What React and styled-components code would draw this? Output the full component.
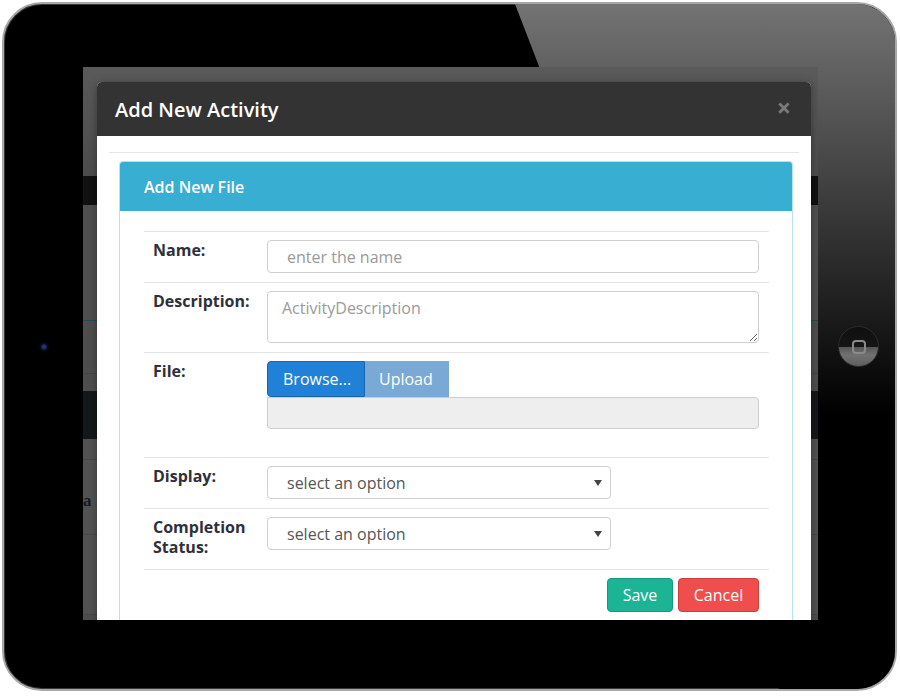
import React from 'react';
import styled, { createGlobalStyle } from 'styled-components';

const FONT = "'Open Sans', 'Liberation Sans', sans-serif";

const GlobalStyle = createGlobalStyle`
  html, body {
    margin: 0;
    padding: 0;
    background: #fff;
  }
  body {
    font-family: ${FONT};
  }
  * {
    box-sizing: border-box;
  }
`;

const Page = styled.div`
  width: 900px;
  height: 696px;
  padding: 2px 0 0 2px;
  background: #fff;
  overflow: hidden;
`;

const Tablet = styled.div`
  position: relative;
  width: 895px;
  height: 689px;
  border: 2px solid #a8a8a8;
  border-radius: 40px;
  background: #000;
  overflow: hidden;
  display: flex;
  align-items: flex-start;
  padding-top: 63px;
  box-shadow: inset 0 0 0 1px #3a3a3a;
`;

const GlareSvg = styled.svg`
  position: absolute;
  left: 0;
  top: 0;
  width: 100%;
  height: 100%;
  pointer-events: none;
`;

const Side = styled.div`
  position: relative;
  width: ${(p) => p.$w}px;
  height: 553px;
  display: flex;
  align-items: center;
  justify-content: center;
  padding-top: 6px;
  padding-left: ${(p) => p.$pl || 0}px;
`;

const Camera = styled.div`
  width: 6px;
  height: 6px;
  border-radius: 50%;
  background: radial-gradient(circle at 50% 45%, #2a3f9a 0%, #15204d 60%, #0b0f20 100%);
  box-shadow: 0 0 3px 1px rgba(40, 60, 120, 0.35);
`;

const HomeButton = styled.div`
  width: 41px;
  height: 41px;
  border-radius: 50%;
  border: 1px solid #2c2c2c;
  background: linear-gradient(to bottom, #0f0f0f 0%, #151515 50%, #555 51%, #727272 72%, #5e5e5e 100%);
  display: flex;
  align-items: center;
  justify-content: center;
`;

const HomeSquare = styled.div`
  width: 14px;
  height: 14px;
  border: 2px solid #8a8a8a;
  border-radius: 4px;
`;

const Screen = styled.div`
  position: relative;
  width: 735px;
  height: 553px;
  overflow: hidden;
  background: #505050;
  display: flex;
  flex-direction: column;
`;

const Band = styled.div`
  height: ${(p) => p.$h}px;
  flex: none;
  background: ${(p) => p.$bg || '#505050'};
  border-bottom: ${(p) => (p.$line ? `1px solid ${p.$line}` : 'none')};
  display: flex;
  align-items: center;
`;

const BandText = styled.span`
  font-family: 'Liberation Serif', serif;
  font-weight: 700;
  font-size: 17px;
  color: #161a26;
  margin-top: 8px;
`;

const Modal = styled.div`
  position: absolute;
  left: 14px;
  top: 15px;
  width: 714px;
  height: 600px;
  background: #fff;
  border-radius: 5px 5px 0 0;
  box-shadow: 0 2px 8px rgba(0, 0, 0, 0.35);
  display: flex;
  flex-direction: column;
`;

const ModalHeader = styled.div`
  height: 54px;
  flex: none;
  background: #333;
  border-radius: 5px 5px 0 0;
  display: flex;
  align-items: center;
  justify-content: space-between;
  padding: 0 20px 0 18px;
`;

const ModalTitle = styled.h4`
  margin: 0;
  font-size: 20px;
  font-weight: 600;
  color: #fff;
`;

const Close = styled.span`
  font-size: 25px;
  font-weight: 700;
  line-height: 1;
  color: #7b7b7b;
  margin-top: -4px;
`;

const ModalBody = styled.div`
  flex: 1;
  display: flex;
  flex-direction: column;
  padding: 0 12px;
`;

const Divider = styled.div`
  height: 17px;
  flex: none;
  border-bottom: 1px solid #e6e6e6;
`;

const Panel = styled.div`
  flex: 1;
  margin: 8px 6px 0 10px;
  border: 1px solid #b6e3ee;
  border-bottom: none;
  border-radius: 4px 4px 0 0;
`;

const PanelHeading = styled.div`
  height: 49px;
  background: #39aed3;
  border-radius: 3px 3px 0 0;
  display: flex;
  align-items: center;
  padding-left: 24px;
  color: #fff;
  font-size: 16px;
  font-weight: 600;
`;

const PanelBody = styled.div`
  padding: 20px 23px 0 24px;
`;

const Row = styled.div`
  display: grid;
  grid-template-columns: 123px 1fr;
  border-top: 1px solid #e4e4e4;
`;

const Label = styled.div`
  padding: 8px 9px 12px;
  font-size: 16px;
  line-height: 20px;
  font-weight: 700;
  color: #2f3038;
`;

const Cell = styled.div`
  padding: 8px 10px 9px 0;
  display: flex;
  flex-direction: column;
  align-items: flex-start;
`;

const TextInput = styled.input`
  width: 100%;
  height: 33px;
  border: 1px solid #cfcfcf;
  border-radius: 4px;
  padding: 0 19px;
  font-family: ${FONT};
  font-size: 16px;
  color: #555;
  outline: none;
  &::placeholder {
    color: #9a9a9a;
  }
`;

const TextArea = styled.textarea`
  width: 100%;
  height: 52px;
  border: 1px solid #cfcfcf;
  border-radius: 4px;
  padding: 6px 14px;
  font-family: ${FONT};
  font-size: 16px;
  line-height: 20px;
  color: #555;
  outline: none;
  resize: vertical;
  display: block;
  &::placeholder {
    color: #9a9a9a;
  }
`;

const FileButtons = styled.div`
  display: flex;
`;

const FileButton = styled.div`
  height: 36px;
  width: ${(p) => p.$w}px;
  padding-left: ${(p) => p.$pl}px;
  display: flex;
  align-items: center;
  font-size: 16px;
  color: #fff;
  background: ${(p) => p.$bg};
  border: 1px solid ${(p) => p.$bd};
  border-radius: ${(p) => p.$radius};
`;

const FileBox = styled.div`
  width: 100%;
  height: 32px;
  background: #eee;
  border: 1px solid #cdcdcd;
  border-radius: 0 4px 4px 4px;
  margin-bottom: 19px;
`;

const Select = styled.div`
  width: 344px;
  height: 33px;
  border: 1px solid #cfcfcf;
  border-radius: 4px;
  display: flex;
  align-items: center;
  justify-content: space-between;
  padding: 0 8px 0 19px;
  font-size: 16px;
  color: #555;
`;

const Caret = styled.span`
  width: 0;
  height: 0;
  border-left: 4px solid transparent;
  border-right: 4px solid transparent;
  border-top: 6px solid #444;
`;

const Actions = styled.div`
  border-top: 1px solid #e4e4e4;
  display: flex;
  justify-content: flex-end;
  gap: 5px;
  padding: 8px 10px 0 0;
`;

const ActionButton = styled.div`
  height: 34px;
  width: ${(p) => p.$w}px;
  display: flex;
  align-items: center;
  justify-content: center;
  font-size: 16px;
  color: #fff;
  background: ${(p) => p.$bg};
  border: 1px solid ${(p) => p.$bd};
  border-radius: 4px;
`;

function Glare() {
  return (
    <GlareSvg viewBox="0 0 891 685" preserveAspectRatio="none">
      <defs>
        <linearGradient id="glare" x1="0" y1="0" x2="0" y2="1">
          <stop offset="0" stopColor="#737373" />
          <stop offset="0.36" stopColor="#2e2e2e" />
          <stop offset="0.6" stopColor="#000" />
        </linearGradient>
      </defs>
      <polygon points="511,0 891,0 891,685 775,685" fill="url(#glare)" />
    </GlareSvg>
  );
}

export default function App() {
  return (
    <Page>
      <GlobalStyle />
      <Tablet>
        <Glare />
        <Side $w={79}>
          <Camera />
        </Side>
        <Screen>
          <Band $h={109} $bg="linear-gradient(#5a5a5a, #4c4c4c)" />
          <Band $h={29} $bg="#111" />
          <Band $h={116} $bg="#4f4f4f" $line="#1f4d5b" />
          <Band $h={53} $bg="#4e4e4e" $line="#444" />
          <Band $h={17} $bg="#4e4e4e" />
          <Band $h={48} $bg="#15181b" />
          <Band $h={21} $bg="#525252" $line="#474747" />
          <Band $h={75} $bg="#525252" $line="#474747">
            <BandText>a</BandText>
          </Band>
          <Band $h={80} $bg="#525252" $line="#474747" />
          <Band $h={10} $bg="#4e4e4e" />

          <Modal>
            <ModalHeader>
              <ModalTitle>Add New Activity</ModalTitle>
              <Close>×</Close>
            </ModalHeader>
            <ModalBody>
              <Divider />
              <Panel>
                <PanelHeading>Add New File</PanelHeading>
                <PanelBody>
                  <Row>
                    <Label>Name:</Label>
                    <Cell>
                      <TextInput placeholder="enter the name" />
                    </Cell>
                  </Row>
                  <Row>
                    <Label>Description:</Label>
                    <Cell>
                      <TextArea placeholder="ActivityDescription" />
                    </Cell>
                  </Row>
                  <Row>
                    <Label>File:</Label>
                    <Cell>
                      <FileButtons>
                        <FileButton $w={98} $pl={15} $bg="#2181d7" $bd="#1a66ae" $radius="4px 0 0 4px">
                          Browse...
                        </FileButton>
                        <FileButton $w={84} $pl={13} $bg="#79a9d4" $bd="#79a9d4" $radius="0">
                          Upload
                        </FileButton>
                      </FileButtons>
                      <FileBox />
                    </Cell>
                  </Row>
                  <Row>
                    <Label>Display:</Label>
                    <Cell>
                      <Select>
                        select an option
                        <Caret />
                      </Select>
                    </Cell>
                  </Row>
                  <Row>
                    <Label>
                      Completion
                      <br />
                      Status:
                    </Label>
                    <Cell>
                      <Select>
                        select an option
                        <Caret />
                      </Select>
                    </Cell>
                  </Row>
                  <Actions>
                    <ActionButton $w={66} $bg="#1bb495" $bd="#16987e">
                      Save
                    </ActionButton>
                    <ActionButton $w={81} $bg="#ef4e4c" $bd="#c93f3d">
                      Cancel
                    </ActionButton>
                  </Actions>
                </PanelBody>
              </Panel>
            </ModalBody>
          </Modal>
        </Screen>
        <Side $w={77} $pl={4}>
          <HomeButton>
            <HomeSquare />
          </HomeButton>
        </Side>
      </Tablet>
    </Page>
  );
}
